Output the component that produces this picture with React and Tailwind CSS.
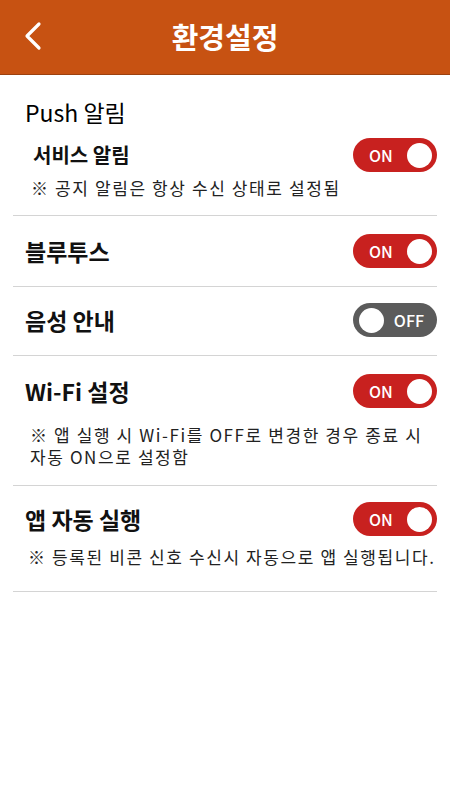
import React, { useState } from 'react';

const font = { fontFamily: '"Noto Sans CJK KR", "Noto Sans", sans-serif' };

function Toggle({ on, onClick }) {
    if (on) {
        return (
            <button
                onClick={onClick}
                className="flex items-center justify-between w-[84px] h-[34px] rounded-full bg-[#c8211f] pl-[16px] pr-[5px] shrink-0"
            >
                <span className="text-white text-[16px] font-medium leading-none">ON</span>
                <span className="w-[25px] h-[25px] rounded-full bg-white" />
            </button>
        );
    }
    return (
        <button
            onClick={onClick}
            className="flex items-center justify-between w-[84px] h-[34px] rounded-full bg-[#5b5b5b] pl-[6px] pr-[13px] shrink-0"
        >
            <span className="w-[25px] h-[25px] rounded-full bg-white" />
            <span className="text-white text-[16px] font-medium leading-none">OFF</span>
        </button>
    );
}

function Note({ children, className = "" }) {
    return (
        <p className={`text-[17px] leading-[22px] tracking-[1.6px] text-[#222] ${className}`}>
            {children}
        </p>
    );
}

export default function App() {
    const [state, setState] = useState({ service: true, bt: true, voice: false, wifi: true, auto: true });
    const flip = (k) => setState({ ...state, [k]: !state[k] });

    return (
        <div className="w-[450px] h-[800px] bg-white" style={font}>
            <header className="h-[75px] bg-[#c75212] border-b border-[#9c410f] flex items-center relative">
                <button className="absolute left-[20px] top-[20px] w-[26px] h-[32px] flex items-center justify-center">
                    <svg width="22" height="30" viewBox="0 0 22 30" fill="none">
                        <path d="M17 3 L5 15 L17 27" stroke="white" strokeWidth="3.2" strokeLinecap="round" strokeLinejoin="round" />
                    </svg>
                </button>
                <h1 className="w-full text-center text-white text-[29px] font-bold leading-none pb-[2px]">환경설정</h1>
            </header>

            <div className="mx-[13px]">
                <section className="pt-[22px] pb-[16px] border-b border-[#d4d4d4]">
                    <h2 className="pl-[12px] text-[23px] leading-[30px] font-normal text-black">Push 알림</h2>
                    <div className="flex items-center justify-between mt-[11px] pl-[20px]">
                        <span className="text-[20px] font-bold leading-none text-[#111]">서비스 알림</span>
                        <Toggle on={state.service} onClick={() => flip('service')} />
                    </div>
                    <Note className="mt-[5px] pl-[18px]">※ 공지 알림은 항상 수신 상태로 설정됨</Note>
                </section>

                <section className="py-[18px] border-b border-[#d4d4d4] flex items-center justify-between pl-[12px]">
                    <span className="text-[23px] font-bold leading-none text-[#111]">블루투스</span>
                    <Toggle on={state.bt} onClick={() => flip('bt')} />
                </section>

                <section className="pt-[16px] pb-[18px] border-b border-[#d4d4d4] flex items-center justify-between pl-[12px]">
                    <span className="text-[23px] font-bold leading-none text-[#111]">음성 안내</span>
                    <Toggle on={state.voice} onClick={() => flip('voice')} />
                </section>

                <section className="pt-[18px] pb-[17px] border-b border-[#d4d4d4]">
                    <div className="flex items-center justify-between pl-[12px]">
                        <span className="text-[23px] font-bold leading-none text-[#111]">Wi-Fi 설정</span>
                        <Toggle on={state.wifi} onClick={() => flip('wifi')} />
                    </div>
                    <Note className="mt-[16px] pl-[17px]">
                        <span className="block">※ 앱 실행 시 Wi-Fi를 OFF로 변경한 경우 종료 시</span>
                        <span className="block">자동 ON으로 설정함</span>
                    </Note>
                </section>

                <section className="pt-[16px] pb-[23px] border-b border-[#d4d4d4]">
                    <div className="flex items-center justify-between pl-[12px]">
                        <span className="text-[23px] font-bold leading-none text-[#111]">앱 자동 실행</span>
                        <Toggle on={state.auto} onClick={() => flip('auto')} />
                    </div>
                    <Note className="mt-[10px] pl-[15px] whitespace-nowrap">※ 등록된 비콘 신호 수신시 자동으로 앱 실행됩니다.</Note>
                </section>
            </div>
        </div>
    );
}
